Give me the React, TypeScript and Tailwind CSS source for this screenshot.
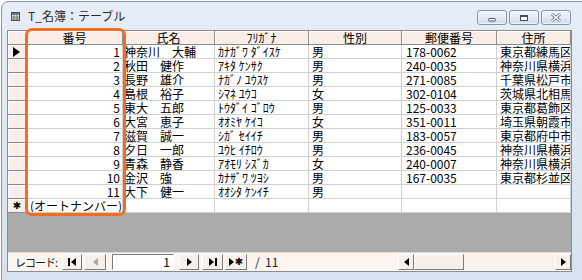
import React from "react"

const rows = [
  ["1", "神奈川　大輔", "ｶﾅｶﾞﾜ ﾀﾞｲｽｹ", "男", "178-0062", "東京都練馬区"],
  ["2", "秋田　健作", "ｱｷﾀ ｹﾝｻｸ", "男", "240-0035", "神奈川県横浜市"],
  ["3", "長野　雄介", "ﾅｶﾞﾉ ﾕｳｽｹ", "男", "271-0085", "千葉県松戸市"],
  ["4", "島根　裕子", "ｼﾏﾈ ﾕｳｺ", "女", "302-0104", "茨城県北相馬郡"],
  ["5", "東大　五郎", "ﾄｳﾀﾞｲ ｺﾞﾛｳ", "男", "125-0033", "東京都葛飾区"],
  ["6", "大宮　恵子", "ｵｵﾐﾔ ｹｲｺ", "女", "351-0011", "埼玉県朝霞市"],
  ["7", "滋賀　誠一", "ｼｶﾞ ｾｲｲﾁ", "男", "183-0057", "東京都府中市"],
  ["8", "夕日　一郎", "ﾕｳﾋ ｲﾁﾛｳ", "男", "236-0045", "神奈川県横浜市"],
  ["9", "青森　静香", "ｱｵﾓﾘ ｼｽﾞｶ", "女", "240-0007", "神奈川県横浜市"],
  ["10", "金沢　強", "ｶﾅｻﾞﾜ ﾂﾖｼ", "男", "167-0035", "東京都杉並区"],
  ["11", "大下　健一", "ｵｵｼﾀ ｹﾝｲﾁ", "男", "", ""],
]

const headers = ["番号", "氏名", "ﾌﾘｶﾞﾅ", "性別", "郵便番号", "住所"]

// raised 3D cell / button look
const raised = "border-r border-b border-[#8a8a8a] shadow-[inset_1px_1px_0_#ffffff]"
const cell = "h-[14px] border-r border-b border-[#d0d0d0] bg-white overflow-hidden whitespace-nowrap leading-[13px] text-[12px]"

const Tri = ({ dir = "r", color = "#000" }: { dir?: "l" | "r"; color?: string }) => (
  <svg width="5" height="8" viewBox="0 0 5 8">
    {dir === "r" ? <polygon points="0,0 5,4 0,8" fill={color} /> : <polygon points="5,0 0,4 5,8" fill={color} />}
  </svg>
)

const NavBtn = ({ w, children }: { w: string; children: React.ReactNode }) => (
  <div className={`${w} h-[16px] flex items-center justify-center gap-[1px] bg-[#f7f0ea] border border-t-white border-l-white border-r-[#7c7c7c] border-b-[#7c7c7c]`}>
    {children}
  </div>
)

const TitleBtn = ({ children }: { children: React.ReactNode }) => (
  <div className="w-[30px] h-[15px] flex items-center justify-center rounded-[3px] border border-[#8193ad] bg-gradient-to-b from-[#f1f5fb] via-[#e2eaf5] to-[#cfdbeb] shadow-[inset_0_0_0_1px_rgba(255,255,255,0.6)]">
    {children}
  </div>
)

export default function App() {
  return (
    <div className="relative w-[582px] h-[280px] overflow-hidden bg-white font-['Noto_Sans_CJK_JP',sans-serif] text-black">
      <div className="ml-[1px] mt-[1px] w-[592px] h-[300px] rounded-t-[7px] border border-[#8495ad] bg-gradient-to-b from-[#e6edf7] to-[#d5e1ef] px-[5px]">
        {/* title bar */}
        <div className="w-[565px] h-[28px] flex items-center">
          <svg className="ml-[4px]" width="9" height="9" viewBox="0 0 9 9">
            <rect x="0.5" y="0.5" width="8" height="8" fill="#fff" stroke="#4a4a4a" />
            <rect x="1" y="1" width="7" height="2" fill="#6f7f99" />
            <line x1="0.5" y1="5" x2="8.5" y2="5" stroke="#6b6b6b" />
            <line x1="0.5" y1="7" x2="8.5" y2="7" stroke="#6b6b6b" />
            <line x1="3" y1="0.5" x2="3" y2="8.5" stroke="#6b6b6b" />
            <line x1="6" y1="0.5" x2="6" y2="8.5" stroke="#6b6b6b" />
          </svg>
          <span className="ml-[8px] text-[12px] leading-[14px] text-[#2a2a2a]">T_名簿：テーブル</span>
          <div className="ml-auto mr-[1px] flex gap-[2px] mt-[3px]">
            <TitleBtn>
              <svg width="10" height="8" viewBox="0 0 10 8">
                <rect x="1.5" y="4.5" width="7" height="2.5" rx="1" fill="#fff" stroke="#3f4d63" />
              </svg>
            </TitleBtn>
            <TitleBtn>
              <svg width="10" height="8" viewBox="0 0 10 8">
                <rect x="1.5" y="1.5" width="7" height="5" fill="#fff" stroke="#3f4d63" />
                <line x1="2" y1="2.5" x2="8" y2="2.5" stroke="#3f4d63" />
              </svg>
            </TitleBtn>
            <TitleBtn>
              <svg width="12" height="9" viewBox="0 0 12 9">
                <path d="M2 1 L10 8 M10 1 L2 8" stroke="#6d7c92" strokeWidth="3" />
                <path d="M2 1 L10 8 M10 1 L2 8" stroke="#ffffff" strokeWidth="1.2" />
              </svg>
            </TitleBtn>
          </div>
        </div>

        {/* datasheet */}
        <div className="w-[565px] border border-[#8c8c8c] flex flex-col">
          <div className="grid grid-cols-[19px_96px_92px_94px_93px_95px_1fr]">
            <div className={`h-[14px] bg-[#f8eee7] ${raised}`} />
            {headers.map((h) => (
              <div key={h} className={`h-[14px] bg-[#f8eee7] ${raised} text-center text-[12px] leading-[13px] overflow-hidden whitespace-nowrap`}>
                {h}
              </div>
            ))}
            {rows.map((r, i) => (
              <React.Fragment key={r[0]}>
                <div className={`h-[14px] bg-[#f8eee7] ${raised} flex items-center pl-[5px]`}>
                  {i === 0 && (
                    <svg width="7" height="10" viewBox="0 0 7 10">
                      <polygon points="0,0 7,5 0,10" fill="#000" />
                    </svg>
                  )}
                </div>
                <div className={`${cell} text-right pr-[2px]`}>{r[0]}</div>
                <div className={`${cell} pl-[1px]`}>{r[1]}</div>
                <div className={`${cell} pl-[3px]`}>{r[2]}</div>
                <div className={`${cell} pl-[3px]`}>{r[3]}</div>
                <div className={`${cell} pl-[4px]`}>{r[4]}</div>
                <div className={`${cell} pl-[3px]`}>{r[5]}</div>
              </React.Fragment>
            ))}
            <div className={`h-[14px] bg-[#f8eee7] ${raised} flex items-center justify-center text-[10px] leading-[13px] font-['DejaVu_Sans',sans-serif]`}>
              ✱
            </div>
            <div className={`${cell} pl-[3px] text-[11px]`}>(オートナンバー)</div>
            <div className={cell} />
            <div className={cell} />
            <div className={cell} />
            <div className={cell} />
            <div className={cell} />
          </div>

          <div className="h-[39px] bg-[#ababab]" />

          {/* record navigation + scrollbar */}
          <div className="h-[19px] flex items-center bg-[#fbf4ef] border-t border-[#dcdcdc]">
            <div className="flex-1 flex items-center">
              <span className="ml-[7px] w-[47px] text-[11px] leading-[14px] tracking-[-1px] text-[#222]">レコード:</span>
              <NavBtn w="w-[20px]">
                <div className="w-[2px] h-[8px] bg-black" />
                <Tri dir="l" />
              </NavBtn>
              <div className="ml-[2px]">
                <NavBtn w="w-[22px]">
                  <Tri dir="l" color="#a8a8a8" />
                </NavBtn>
              </div>
              <div className="ml-[6px] w-[62px] h-[16px] bg-white border border-t-[#7c7c7c] border-l-[#7c7c7c] border-r-white border-b-white text-right pr-[3px] text-[12px] leading-[14px]">
                1
              </div>
              <div className="ml-[5px]">
                <NavBtn w="w-[20px]">
                  <Tri />
                </NavBtn>
              </div>
              <div className="ml-[3px]">
                <NavBtn w="w-[21px]">
                  <Tri />
                  <div className="w-[2px] h-[8px] bg-black" />
                </NavBtn>
              </div>
              <div className="ml-[2px]">
                <NavBtn w="w-[22px]">
                  <Tri />
                  <span className="text-[10px] leading-[10px] font-['DejaVu_Sans',sans-serif]">✱</span>
                </NavBtn>
              </div>
              <span className="ml-[8px] text-[12px] leading-[14px] text-[#222]">/&nbsp;&nbsp;11</span>
            </div>
            <div className="w-[173px] flex items-center h-[16px]">
              <NavBtn w="w-[16px]">
                <Tri dir="l" />
              </NavBtn>
              <div className="w-[50px] h-[16px] bg-[#f7f0ea] border border-t-white border-l-white border-r-[#7c7c7c] border-b-[#7c7c7c]" />
              <div className="flex-1 h-[16px] bg-[#f9f1ec]" />
              <NavBtn w="w-[16px]">
                <Tri />
              </NavBtn>
            </div>
          </div>
        </div>
      </div>

      {/* orange highlight around the 番号 column */}
      <div className="absolute left-[25px] top-[28px] w-[101px] h-[188px] rounded-[7px] border-[3px] border-[#f26d20]" />
    </div>
  )
}
